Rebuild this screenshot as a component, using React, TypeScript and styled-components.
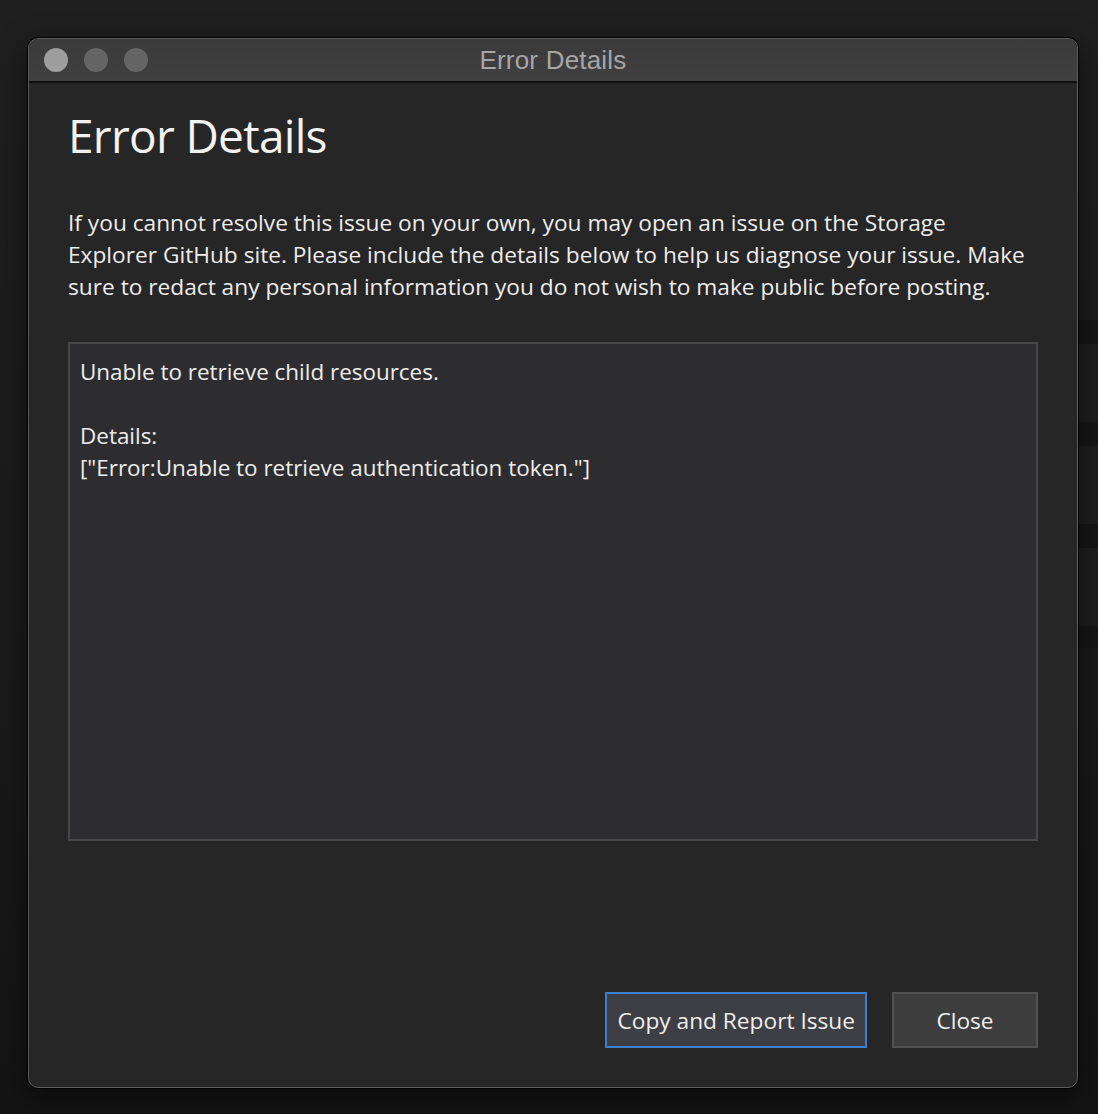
import styled, { createGlobalStyle } from 'styled-components';

const GlobalStyle = createGlobalStyle`
  html, body {
    margin: 0;
    padding: 0;
  }
  body {
    background: linear-gradient(180deg, #1f1f1f 0%, #1a1a1a 60%, #141414 100%);
    font-family: 'Open Sans', 'Noto Sans', sans-serif;
  }
`;

const Desktop = styled.div`
  position: relative;
  width: 1098px;
  height: 1114px;
  box-sizing: border-box;
  padding: 38px 20px 26px 28px;
  overflow: hidden;
`;

// the app behind the dialog peeks out on the right edge
const BehindStrip = styled.div`
  position: absolute;
  left: 1078px;
  top: 320px;
  width: 20px;
  height: 328px;
  background: repeating-linear-gradient(
    180deg,
    #161616 0px,
    #161616 24px,
    #1e1e1e 24px,
    #1e1e1e 102px
  );
`;

const Window = styled.div`
  position: relative;
  height: 100%;
  display: flex;
  flex-direction: column;
  background: #262626;
  border-radius: 10px;
  border: 1px solid #5c5c5c;
  box-shadow: 0 0 0 1px #000, 0 10px 30px rgba(0, 0, 0, 0.5);
  overflow: hidden;
  box-sizing: border-box;
`;

const TitleBar = styled.div`
  position: relative;
  height: 42px;
  flex: none;
  display: flex;
  align-items: center;
  justify-content: center;
  background: linear-gradient(180deg, #3a3a3a 0%, #404040 100%);
  border-bottom: 2px solid #111;
`;

const Lights = styled.div`
  position: absolute;
  left: 15px;
  top: 9px;
  display: flex;
  gap: 16px;
`;

const Light = styled.span<{ $active?: boolean }>`
  width: 24px;
  height: 24px;
  border-radius: 50%;
  background: ${({ $active }) => ($active ? '#9e9e9e' : '#656565')};
`;

const TitleText = styled.span`
  font-family: 'Liberation Sans', Arial, sans-serif;
  font-size: 26px;
  color: #a6a6a6;
  letter-spacing: 0.2px;
`;

const Body = styled.div`
  flex: 1;
  display: flex;
  flex-direction: column;
  padding: 22px 39px 39px 39px;
  color: #f0f0f0;
`;

const Heading = styled.h1`
  margin: 0 0 42px 0;
  font-size: 46px;
  font-weight: 400;
  line-height: 60px;
  letter-spacing: -0.7px;
  color: #f2f2f2;
`;

const Intro = styled.p`
  margin: 0 0 39px 0;
  font-size: 22.7px;
  line-height: 32px;
  color: #ededed;
  white-space: nowrap;
`;

const DetailsBox = styled.div`
  height: 499px;
  box-sizing: border-box;
  padding: 12px 10px;
  background: #2d2d30;
  border: 2px solid #474747;
  white-space: pre-wrap;
  font-size: 22.45px;
  line-height: 32px;
  color: #ededed;
`;

const Footer = styled.div`
  margin-top: auto;
  display: flex;
  justify-content: flex-end;
  gap: 25px;
`;

const DialogButton = styled.button<{ $primary?: boolean }>`
  height: 56px;
  box-sizing: border-box;
  padding: 0 10px;
  min-width: 146px;
  font-family: 'Open Sans', 'Noto Sans', sans-serif;
  font-size: 22.7px;
  color: #eeeeee;
  background: ${({ $primary }) => ($primary ? '#3e3f44' : '#3d3d3d')};
  border: 2px solid ${({ $primary }) => ($primary ? '#3a7fd0' : '#515151')};
  border-radius: 0;
  cursor: pointer;
`;

const details = `Unable to retrieve child resources.

Details:
["Error:Unable to retrieve authentication token."]`;

export default function App() {
  return (
    <>
      <GlobalStyle />
      <Desktop>
        <BehindStrip />
        <Window>
          <TitleBar>
            <Lights>
              <Light $active />
              <Light />
              <Light />
            </Lights>
            <TitleText>Error Details</TitleText>
          </TitleBar>
          <Body>
            <Heading>Error Details</Heading>
            <Intro>
              If you cannot resolve this issue on your own, you may open an issue on the Storage
              <br />
              Explorer GitHub site. Please include the details below to help us diagnose your issue. Make
              <br />
              sure to redact any personal information you do not wish to make public before posting.
            </Intro>
            <DetailsBox>{details}</DetailsBox>
            <Footer>
              <DialogButton $primary>Copy and Report Issue</DialogButton>
              <DialogButton>Close</DialogButton>
            </Footer>
          </Body>
        </Window>
      </Desktop>
    </>
  );
}
